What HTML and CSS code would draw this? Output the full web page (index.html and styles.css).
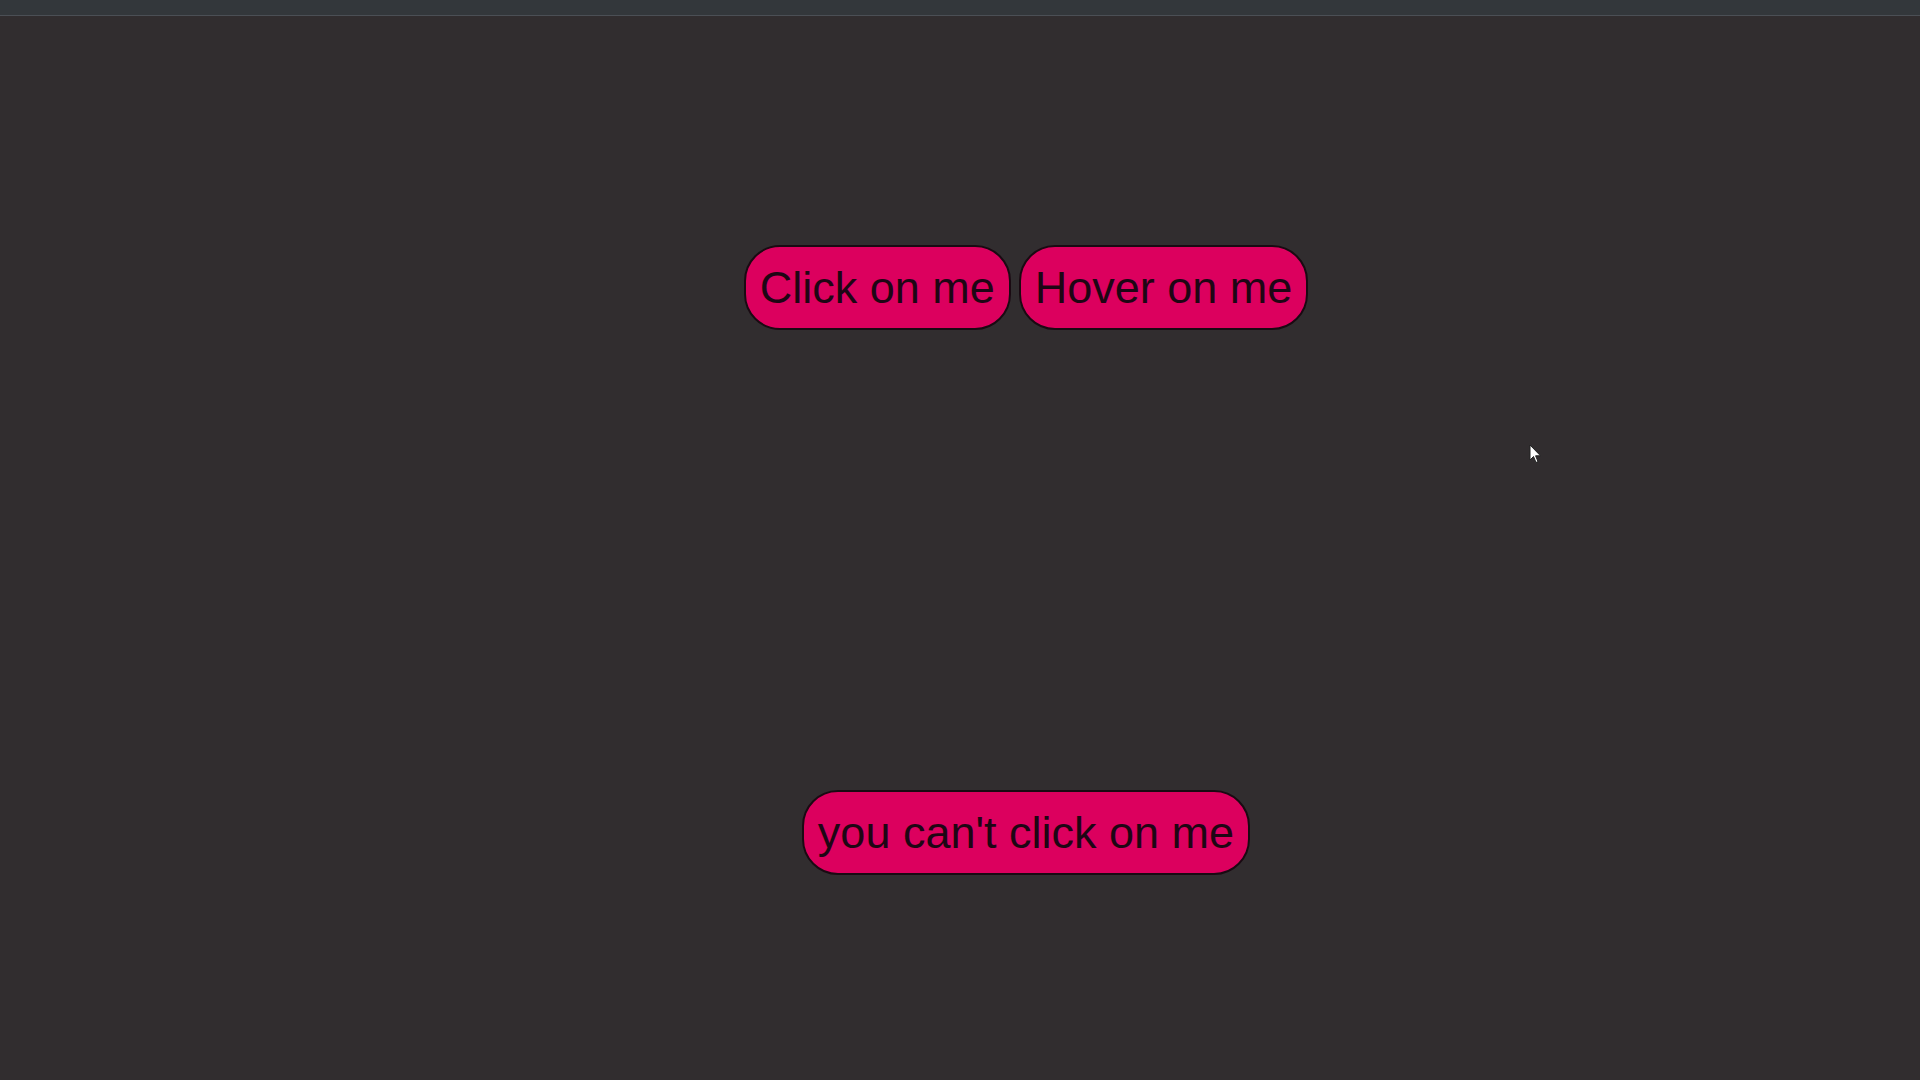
FILE: index.html
```html
<!DOCTYPE html>
<html>
<head>
<meta charset="utf-8">
<link rel="stylesheet" href="styles.css">
</head>
<body>
<div class="topbar"></div>
<main class="stage">
  <div class="row row-top">
    <button class="pill">Click on me</button>
    <button class="pill">Hover on me</button>
  </div>
  <div class="row row-bottom">
    <button class="pill">you can't click on me</button>
  </div>
</main>
<svg class="cursor" width="13" height="20" viewBox="0 0 13 20"><path d="M1 1 L1 16 L4.5 12.5 L7 18.5 L9 17.6 L6.6 11.8 L11.5 11.8 Z" fill="#fff" stroke="#222" stroke-width="1"/></svg>
</body>
</html>
```
FILE: styles.css
```css
html, body {
  margin: 0;
  padding: 0;
  height: 100%;
}
body {
  background: #312d2f;
  font-family: "Liberation Sans", Arial, sans-serif;
  overflow: hidden;
  position: relative;
}
.topbar {
  height: 15px;
  background: #33373b;
  border-bottom: 1px solid #4b4f55;
}
.stage {
  padding-left: 132px;
  display: flex;
  flex-direction: column;
  align-items: center;
}
.row {
  display: flex;
  gap: 8px;
}
.row-top {
  margin-top: 229px;
}
.row-bottom {
  margin-top: 460px;
}
.pill {
  font-family: "Liberation Sans", Arial, sans-serif;
  font-size: 45px;
  line-height: 49px;
  padding: 16px 14px;
  background: #dc005e;
  color: #1e0614;
  border: 2px solid #1a0a12;
  border-radius: 36px;
  cursor: pointer;
}
.cursor {
  position: absolute;
  left: 1529px;
  top: 444px;
}
```
